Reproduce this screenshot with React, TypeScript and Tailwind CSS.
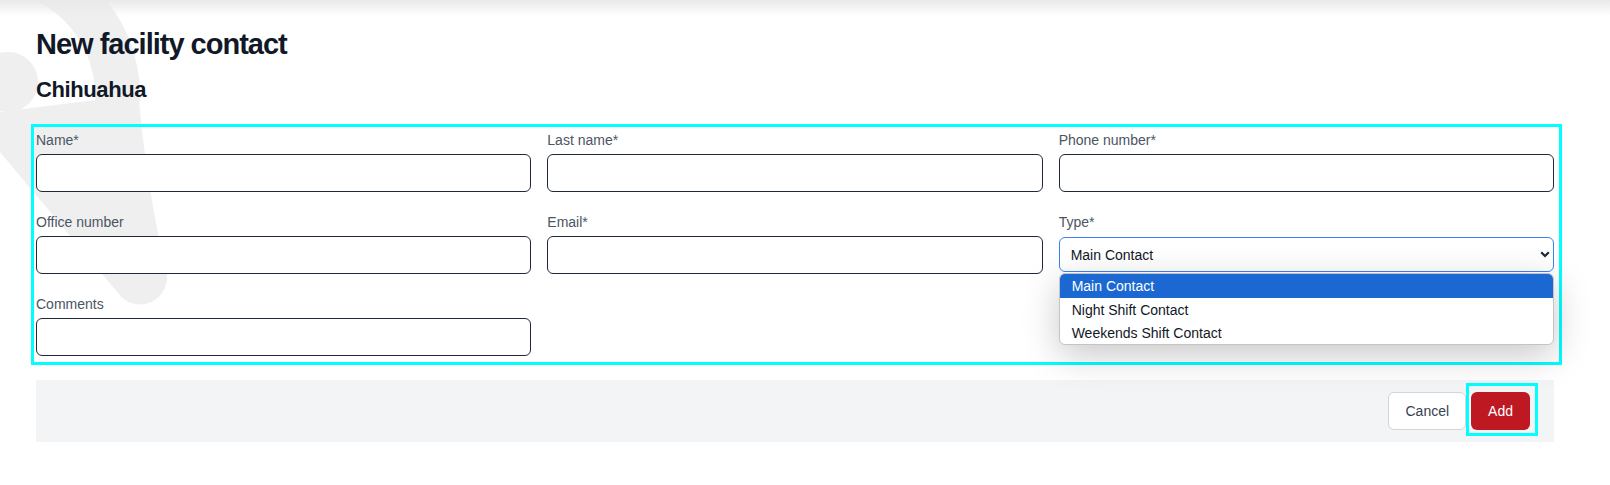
import React from 'react';

const Field = ({ label }: { label: string }) => (
  <div className="flex flex-col">
    <label className="mb-1 text-sm leading-5 text-[#4b5563]">{label}</label>
    <input className="h-[38px] w-full rounded-md border border-[#1f2937] bg-white px-3 text-sm outline-none" />
  </div>
);

// faint logo in the page background
const Watermark = () => (
  <svg className="pointer-events-none absolute left-0 top-0" width="220" height="330" viewBox="0 0 220 330">
    <defs>
      <clipPath id="wm-top">
        <rect x="-200" y="-200" width="500" height="302" />
      </clipPath>
    </defs>
    <path
      fill="#efefef"
      fillRule="evenodd"
      clipPath="url(#wm-top)"
      d="M-160 95a150 150 0 1 0 300 0a150 150 0 1 0 -300 0ZM-115 95a105 105 0 1 0 210 0a105 105 0 1 0 -210 0Z"
    />
    <path fill="#efefef" d="M0 112L95 100L139 100C143 150 154 220 166 270A27 27 0 0 1 118 293L0 152Z" />
    <circle cx="8" cy="82" r="30" fill="#efefef" />
  </svg>
);

export default function App() {
  return (
    <div className="relative min-h-[485px] overflow-hidden bg-white font-['Liberation_Sans',Arial,sans-serif]">
      <Watermark />
      <div className="pointer-events-none absolute inset-x-0 top-0 h-4 bg-gradient-to-b from-[#e9e9e9] to-transparent" />

      <div className="relative ml-9 w-[1518px] pt-[26px]">
        <h1 className="text-[29px] font-bold leading-9 tracking-[-1px] text-[#111827]">New facility contact</h1>
        <h2 className="mt-[14px] text-[22px] font-bold leading-7 tracking-[-0.4px] text-[#111827]">Chihuahua</h2>

        <div className="-ml-[5px] -mr-[8px] mt-5 border-[3px] border-[#00ffff] pb-[6px] pl-[2px] pr-[5px] pt-[3px]">
          <div className="grid grid-cols-3 gap-x-4 gap-y-5">
            <Field label="Name*" />
            <Field label="Last name*" />
            <Field label="Phone number*" />
            <Field label="Office number" />
            <Field label="Email*" />
            <div className="flex flex-col">
              <label className="mb-1 text-sm leading-5 text-[#4b5563]">Type*</label>
              <div className="relative">
                <div className="mt-px flex h-[35px] items-center justify-between rounded-md border border-[#3b82f6] bg-white pl-[11px] pr-[3px] text-sm text-[#111827]">
                  <span>Main Contact</span>
                  <svg width="10" height="7" viewBox="0 0 10 7">
                    <path d="M1.2 1.2L5 5L8.8 1.2" fill="none" stroke="#1f2937" strokeWidth="2.2" />
                  </svg>
                </div>
                <div className="absolute left-0 right-0 top-[37px] z-20 overflow-hidden rounded-md border border-[#c4c4c4] bg-white text-sm shadow-[0_10px_36px_rgba(0,0,0,0.22)]">
                  <div className="flex h-6 items-center bg-[#1c68d3] pl-3 text-white">Main Contact</div>
                  <div className="flex h-[23px] items-center pl-3 text-[#111827]">Night Shift Contact</div>
                  <div className="flex h-[23px] items-center pl-3 text-[#111827]">Weekends Shift Contact</div>
                </div>
              </div>
            </div>
            <Field label="Comments" />
          </div>
        </div>

        <div className="mt-[15px] flex justify-end gap-[5px] bg-[#f3f4f6] py-3 pr-6">
          <button className="h-[38px] rounded-md border border-[#d1d5db] bg-white px-4 text-sm text-[#374151]">
            Cancel
          </button>
          <button className="relative h-[38px] rounded-md bg-[#be1823] px-[17px] text-sm text-white">
            Add
            <span className="pointer-events-none absolute -bottom-[6px] -left-[5px] -right-[8px] -top-[9px] border-[3px] border-[#00ffff]" />
          </button>
        </div>
      </div>
    </div>
  );
}
